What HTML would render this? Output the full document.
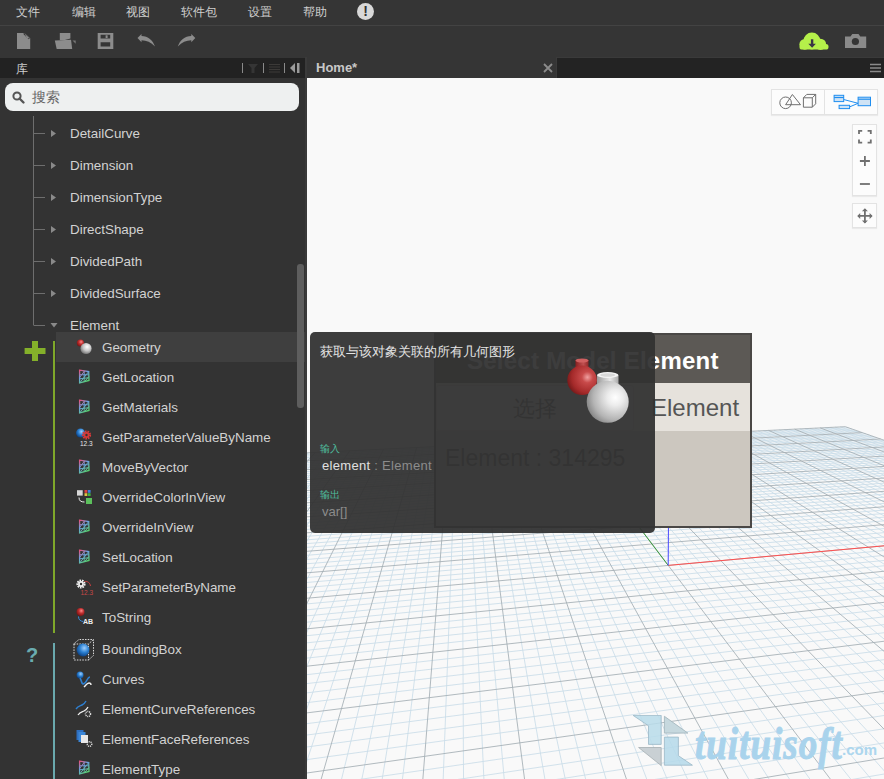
<!DOCTYPE html>
<html><head><meta charset="utf-8">
<style>
*{box-sizing:border-box}
html,body{margin:0;padding:0;width:884px;height:779px;overflow:hidden;background:#353535;font-family:"Liberation Sans",sans-serif}
.a{position:absolute}
#menu{left:0;top:0;width:884px;height:26px;background:#353535;border-bottom:1px solid #434343}
.mi{position:absolute;top:5px;font-size:12px;color:#cfcfcf;line-height:15px;white-space:nowrap}
#tool{left:0;top:25px;width:884px;height:33px;background:transparent}
#libhead{left:0;top:58px;width:305px;height:20px;background:#222}
#libsep{left:305px;top:57px;width:2px;height:722px;background:#3a3a3a}
#lib{left:0;top:78px;width:305px;height:701px;background:#333}
#search{left:5px;top:83px;width:294px;height:28px;border-radius:8px;background:#eef0f0}
.row{position:absolute;font-size:13.4px;color:#d2d2d2;line-height:16px;white-space:nowrap}
#tabbar{left:307px;top:57px;width:577px;height:21px;background:#353535}
#canvas{left:307px;top:78px;width:577px;height:701px;background:#f9f9f9;overflow:hidden}
</style></head><body>
<div id="menu" class="a">
 <div class="mi" style="left:16px">文件</div>
 <div class="mi" style="left:72px">编辑</div>
 <div class="mi" style="left:126px">视图</div>
 <div class="mi" style="left:181px">软件包</div>
 <div class="mi" style="left:248px">设置</div>
 <div class="mi" style="left:303px">帮助</div>
 <div class="a" style="left:357px;top:3px;width:17px;height:17px;border-radius:50%;background:#d8d8d8;color:#313131;font:bold 14px/17px 'Liberation Sans',sans-serif;text-align:center">!</div>
</div>
<div id="tool" class="a">
 <svg class="a" style="left:0;top:0" width="884" height="33">
  <!-- new -->
  <path d="M17 8h7.3l5.9 5v11h-13.2z" fill="#8c8c8c"/><path d="M24.3 8l5.9 5l-1.8 1.2l-5.2-5.4z" fill="#353535"/><path d="M24.6 8.6l4.8 4.4l-2.2 0.8z" fill="#8c8c8c"/>
  <!-- open -->
  <path d="M59.8 8h10.6v5.5l-5.5 1.6h-5.1z" fill="#8c8c8c"/><path d="M54.8 15.4l16.2-0.6l1.2 9.1h-15.5z" fill="#8c8c8c"/><path d="M72.5 15.5h3.2v3.2z" fill="#777"/>
  <!-- save -->
  <path d="M97.7 8h15.6v15.9h-15.6zM100.6 9.8v3.8h9.6v-3.8zM100.6 17.3v4.1h9.6v-4.1z" fill="#8c8c8c" fill-rule="evenodd"/><rect x="105.6" y="10.3" width="2" height="2.8" fill="#8c8c8c"/>
  <!-- undo -->
  <path d="M137.5 12.9L141.5 8.9V11C148 11 153 15.5 155 21.6C151 17.2 146.5 15.2 141.5 15.2V17.3Z" fill="#8c8c8c"/>
  <!-- redo -->
  <path d="M195.3 12.9L191.3 8.9V11C184.8 11 179.8 15.5 177.8 21.6C181.8 17.2 186.3 15.2 191.3 15.2V17.3Z" fill="#8c8c8c"/>
  <!-- cloud -->
  <circle cx="811.9" cy="16" r="8.4" fill="#b5f04a"/><circle cx="820.5" cy="19.3" r="5.6" fill="#b5f04a"/><circle cx="804.8" cy="19.3" r="5.4" fill="#b5f04a"/><rect x="799.5" y="19" width="29" height="5.6" rx="2.6" fill="#b5f04a"/>
  <path d="M810.9 14.2h2.4v4.6h2.6l-3.8 4l-3.8-4h2.6z" fill="#3a3545"/>
  <!-- camera -->
  <path d="M845 11.5h5.5l1.8-2.4h6.2l1.8 2.4h5.9v11.4h-21.2z" fill="#8a8a8a"/><circle cx="855.4" cy="16.5" r="3.6" fill="#353535"/>
 </svg>
</div>
<div id="lib" class="a">
<svg class="a" style="left:0;top:0" width="305" height="701">
 <defs>
  <radialGradient id="gw" cx="0.6" cy="0.35" r="0.7"><stop offset="0" stop-color="#fff"/><stop offset="0.5" stop-color="#c8c8c8"/><stop offset="1" stop-color="#6a6a6a"/></radialGradient>
  <radialGradient id="gr" cx="0.6" cy="0.35" r="0.7"><stop offset="0" stop-color="#ff8a8a"/><stop offset="0.45" stop-color="#c03030"/><stop offset="1" stop-color="#701010"/></radialGradient>
  <radialGradient id="gb" cx="0.6" cy="0.35" r="0.7"><stop offset="0" stop-color="#9fd0ff"/><stop offset="0.5" stop-color="#2a7fd0"/><stop offset="1" stop-color="#0a3a7a"/></radialGradient>
  <linearGradient id="mg" x1="0" y1="0" x2="0.6" y2="1"><stop offset="0" stop-color="#e8507a"/><stop offset="0.45" stop-color="#6aa0e0"/><stop offset="1" stop-color="#58d070"/></linearGradient>
  <g id="mesh" fill="none" stroke="url(#mg)">
   <path d="M1.1 -0.3L10.2 1.1L10.5 9.9L1.1 12.5Z" stroke-width="1.3"/>
   <path d="M1.1 4.2L10.3 4.3M1.1 8.3L10.4 7.2M5.7 0.4V11.3M10.2 1.1L1.1 12.5M6 0.5L1.1 7M10.4 6L5.8 11.5" stroke-width="1"/>
  </g>
 </defs>
 <path d="M33.5 38V247.5" stroke="#6e6e6e" stroke-width="1"/>
 <path d="M34 55.5h11M34 87.5h11M34 119.5h11M34 151.5h11M34 183.5h11M34 215.5h11M34 247.5h11" stroke="#6e6e6e" stroke-width="1"/>
 <path d="M51 52v7l5-3.5zM51 84v7l5-3.5zM51 116v7l5-3.5zM51 148v7l5-3.5zM51 180v7l5-3.5zM51 212v7l5-3.5z" fill="#8a8a8a"/>
 <path d="M50.5 245h7l-3.5 4.5z" fill="#8a8a8a"/>
 <rect x="56" y="254" width="249" height="30" fill="#3f3f3f"/>
 <rect x="53" y="263" width="2" height="292" fill="#7fa82a"/>
 <rect x="53" y="565" width="2" height="136" fill="#6aa9ae"/>
 <path d="M32 263h6v7h7.5v6h-7.5v7h-6v-7h-7.4v-6h7.4z" fill="#84b02a"/>
 <rect x="297" y="186" width="7" height="144" rx="3" fill="#5e5e5e"/>
 <!-- geometry -->
 <circle cx="80.4" cy="265" r="3.6" fill="url(#gr)"/><circle cx="86" cy="270.5" r="5.6" fill="url(#gw)"/>
 <use href="#mesh" x="78.5" y="292.5"/>
 <use href="#mesh" x="78.5" y="322.5"/>
 <!-- getparam -->
 <circle cx="80.5" cy="355" r="4.5" fill="url(#gb)"/>
 <circle cx="86.5" cy="357" r="3.6" fill="none" stroke="#d83a3a" stroke-width="2" stroke-dasharray="1.6 0.9"/><circle cx="86.5" cy="357" r="2.9" fill="#d83a3a"/><circle cx="86.5" cy="357" r="1.2" fill="#333"/>
 <text x="80" y="368" font-family="Liberation Sans" font-size="6.5" fill="#e8e8e8">12.3</text>
 <use href="#mesh" x="78.5" y="382.5"/>
 <!-- override color -->
 <rect x="77" y="412.2" width="5.7" height="5.4" fill="#d8d8d8"/>
 <rect x="84.5" y="412" width="2.8" height="2.8" fill="#e04040"/><rect x="87.8" y="412" width="2.8" height="2.8" fill="#4080e0"/><rect x="84.5" y="415.2" width="2.8" height="2.8" fill="#e0c040"/><rect x="87.8" y="415.2" width="2.8" height="2.8" fill="#40b040"/>
 <rect x="86" y="420" width="6" height="6" fill="#5cc05c"/>
 <path d="M79 419.5C79 423 81 424 84.5 424" fill="none" stroke="#eee" stroke-width="1"/>
 <use href="#mesh" x="78.5" y="442.5"/>
 <use href="#mesh" x="78.5" y="472.5"/>
 <!-- setparam -->
 <circle cx="81" cy="506" r="3.6" fill="none" stroke="#f0f0f0" stroke-width="2" stroke-dasharray="1.6 0.9"/><circle cx="81" cy="506" r="2.9" fill="#f0f0f0"/><circle cx="81" cy="506" r="1.2" fill="#333"/>
 <path d="M84.5 503.5C88 503 90 505 90.5 508" fill="none" stroke="#c84040" stroke-width="1"/>
 <text x="80.5" y="517" font-family="Liberation Sans" font-size="6.5" fill="#c84848">12.3</text>
 <!-- tostring -->
 <circle cx="80.5" cy="534" r="4" fill="url(#gr)"/>
 <path d="M78.5 538.5C78.5 542 80.5 543 83 543.5" fill="none" stroke="#3a8ad8" stroke-width="1"/>
 <text x="83" y="545.5" font-family="Liberation Sans" font-weight="bold" font-size="7" fill="#eee">AB</text>
 <!-- bounding box -->
 <path d="M74 566h14.5l5 -4.5M74 566v16h14.5v-16M88.5 582l5-4.5v-16h-14.5l-5.5 4.5" fill="none" stroke="#ddd" stroke-width="1" stroke-dasharray="1.5 1.2"/>
 <circle cx="83" cy="572" r="6.4" fill="url(#gb)"/>
 <!-- curves -->
 <circle cx="80" cy="597" r="3.5" fill="url(#gb)"/>
 <path d="M80 600c2 3 1 5 3 6c2 0 3-2 4-4c1-2 2-3 3-3" fill="none" stroke="#2e7fd0" stroke-width="1.6"/>
 <path d="M84 609c2-2 3-4 5-4c1 0 2 1 2 2" fill="none" stroke="#f0f0f0" stroke-width="1.4"/>
 <!-- curve refs -->
 <path d="M76 631c2-3 4-3 6-4c2-1 3-2 4-4" fill="none" stroke="#2e7fd0" stroke-width="1.4"/>
 <path d="M78 637c2-3 4-3 6-4c2-1 3-2 4-4" fill="none" stroke="#f0f0f0" stroke-width="1.3"/>
 <circle cx="88" cy="636" r="2.5" fill="none" stroke="#e0e0e0" stroke-width="1.5" stroke-dasharray="1 0.8"/>
 <!-- face refs -->
 <rect x="76.5" y="652" width="7" height="10" fill="#2e6fc0"/><rect x="78.5" y="654" width="7" height="10" fill="#3a86d8"/>
 <rect x="81" y="657" width="7" height="8" fill="#e8e8e8"/>
 <circle cx="89.5" cy="666" r="2.3" fill="none" stroke="#e0e0e0" stroke-width="1.4" stroke-dasharray="1 0.8"/>
 <use href="#mesh" x="78.5" y="683.5"/>
</svg>
<div class="a" style="left:26px;top:567px;font:bold 20px/20px 'Liberation Sans',sans-serif;color:#6aacb0">?</div>
<div class="row" style="left:70px;top:48px">DetailCurve</div>
<div class="row" style="left:70px;top:80px">Dimension</div>
<div class="row" style="left:70px;top:112px">DimensionType</div>
<div class="row" style="left:70px;top:144px">DirectShape</div>
<div class="row" style="left:70px;top:176px">DividedPath</div>
<div class="row" style="left:70px;top:208px">DividedSurface</div>
<div class="row" style="left:70px;top:240px">Element</div>
<div class="row" style="left:102px;top:262px">Geometry</div>
<div class="row" style="left:102px;top:292px">GetLocation</div>
<div class="row" style="left:102px;top:322px">GetMaterials</div>
<div class="row" style="left:102px;top:352px">GetParameterValueByName</div>
<div class="row" style="left:102px;top:382px">MoveByVector</div>
<div class="row" style="left:102px;top:412px">OverrideColorInView</div>
<div class="row" style="left:102px;top:442px">OverrideInView</div>
<div class="row" style="left:102px;top:472px">SetLocation</div>
<div class="row" style="left:102px;top:502px">SetParameterByName</div>
<div class="row" style="left:102px;top:532px">ToString</div>
<div class="row" style="left:102px;top:564px">BoundingBox</div>
<div class="row" style="left:102px;top:594px">Curves</div>
<div class="row" style="left:102px;top:624px">ElementCurveReferences</div>
<div class="row" style="left:102px;top:654px">ElementFaceReferences</div>
<div class="row" style="left:102px;top:684px">ElementType</div>

</div>
<div id="libhead" class="a">
 <div class="a" style="left:16px;top:4px;font-size:12px;color:#cfcfcf;line-height:15px">库</div>
 <svg class="a" style="left:0;top:0" width="305" height="20">
  <rect x="242" y="5" width="1" height="10" fill="#8a8a8a"/>
  <rect x="263" y="5" width="1" height="10" fill="#8a8a8a"/>
  <rect x="284" y="5" width="1" height="10" fill="#8a8a8a"/>
  <path d="M248 6h10l-3.5 4v5h-3v-5z" fill="#353535"/>
  <path d="M269 6h11v1h-11zM269 8.5h11v1h-11zM269 11h11v1h-11zM269 13.5h11v1h-11z" fill="#3c3a38"/>
  <path d="M295 5v10l-5-5z" fill="#9a9a9a"/><rect x="297" y="5" width="2.5" height="10" fill="#9a9a9a"/>
 </svg>
</div>
<div id="libsep" class="a"></div>
<div id="search" class="a">
 <svg class="a" style="left:7px;top:8px" width="14" height="14"><circle cx="5" cy="5" r="3.6" fill="none" stroke="#555" stroke-width="2"/><path d="M7.5 7.5l4 4" stroke="#555" stroke-width="2.4" stroke-linecap="round"/></svg>
 <div class="a" style="left:27px;top:6px;font-size:14px;color:#666;line-height:16px">搜索</div>
</div>
<div id="tabbar" class="a">
 <div class="a" style="left:9px;top:4px;font:bold 13px/14px 'Liberation Sans',sans-serif;color:#c8c8c8">Home*</div>
 <svg class="a" style="left:236px;top:6px" width="10" height="10"><path d="M1 1l8 8M9 1l-8 8" stroke="#8c8c8c" stroke-width="1.8"/></svg>
 <div class="a" style="left:249px;top:0;width:328px;height:21px;background:#232323;border-top:1px solid #3a3a3a;border-left:1px solid #3a3a3a"></div>
 <svg class="a" style="left:563px;top:6px" width="12" height="11"><path d="M0 1.5h11M0 5h11M0 8.5h11" stroke="#8a8a8a" stroke-width="1.6"/></svg>
</div>
<div id="canvas" class="a">
<svg width="577" height="701" style="position:absolute;left:0;top:0">
<path d="M-4257.5 3638.5L-55.5 377.5M-718.4 3630.9L2456.5 1017.8M-4114.7 3638.2L-48.3 377.2M-1419.1 3632.4L2345.9 979.3M-3971.9 3637.9L-41.1 376.8M-2119.9 3633.9L2245.5 944.2M-3829.1 3637.6L-33.9 376.5M-2820.6 3635.4L2153.8 912.2M-3543.4 3637.0L-19.7 375.8M-4222.1 3638.4L1992.7 856.0M-3400.6 3636.6L-12.7 375.5M-3775.6 3169.1L1921.5 831.2M-3257.8 3636.3L-5.6 375.1M-3165.0 2710.1L1855.6 808.2M-3114.9 3636.0L1.4 374.8M-2718.6 2374.5L1794.4 786.9M-2829.3 3635.4L15.3 374.1M-2109.6 1916.7L1684.4 748.5M-2686.5 3635.1L22.2 373.8M-1892.7 1753.6L1634.8 731.2M-2543.6 3634.8L29.1 373.4M-1713.7 1619.0L1588.2 714.9M-2400.8 3634.5L36.0 373.1M-1563.5 1506.1L1544.5 699.7M-2115.2 3633.9L49.6 372.4M-1325.5 1327.2L1464.7 671.8M-1972.4 3633.6L56.4 372.1M-1229.6 1255.1L1428.1 659.1M-1829.5 3633.3L63.2 371.8M-1145.4 1191.8L1393.5 647.0M-1686.7 3633.0L69.9 371.4M-1070.9 1135.8L1360.7 635.6M-1401.1 3632.3L83.3 370.8M-944.8 1041.0L1300.1 614.4M-1258.2 3632.0L89.9 370.5M-891.0 1000.6L1272.1 604.7M-1115.4 3631.7L96.6 370.1M-842.3 963.9L1245.3 595.3M-972.6 3631.4L103.2 369.8M-797.8 930.5L1219.9 586.4M-686.9 3630.8L116.3 369.2M-719.9 871.9L1172.3 569.9M-544.1 3630.5L122.8 368.9M-685.5 846.1L1150.1 562.1M-401.3 3630.2L129.3 368.6M-653.8 822.2L1128.8 554.7M-258.5 3629.9L135.7 368.2M-624.3 800.1L1108.4 547.6M28.9 3583.4L148.6 367.6M-571.4 760.3L1070.1 534.2M169.1 3444.6L155.0 367.3M-547.6 742.4L1052.1 527.9M298.3 3316.8L161.4 367.0M-525.2 725.6L1034.8 521.9M417.7 3198.7L167.7 366.7M-504.3 709.8L1018.1 516.1M631.2 2987.5L180.3 366.1M-466.0 681.1L986.6 505.1M727.0 2892.7L186.6 365.8M-448.5 667.9L971.7 499.9M816.5 2804.2L192.8 365.5M-432.0 655.5L957.3 494.9M900.3 2721.3L199.1 365.2M-416.3 643.7L943.4 490.0M1052.7 2570.4L211.4 364.6M-387.4 622.0L917.0 480.8M1122.3 2501.6L217.6 364.3M-374.0 611.9L904.5 476.4M1187.9 2436.6L223.7 364.0M-361.2 602.3L892.3 472.2M1250.0 2375.3L229.8 363.7M-349.1 593.2L880.6 468.1M1364.3 2262.2L242.0 363.1M-326.4 576.1L858.2 460.3M1417.1 2209.9L248.0 362.8M-315.9 568.2L847.5 456.5M1467.3 2160.3L254.0 362.5M-305.7 560.6L837.1 452.9M1515.1 2113.0L260.0 362.2M-296.0 553.3L827.1 449.4M1604.0 2025.1L271.9 361.6M-277.8 539.6L807.8 442.7M1645.4 1984.1L277.8 361.3M-269.2 533.1L798.6 439.5M1685.0 1944.9L283.7 361.1M-261.0 527.0L789.6 436.3M1722.9 1907.4L289.6 360.8M-253.1 521.0L780.9 433.3M1794.0 1837.0L301.3 360.2M-238.1 509.8L764.1 427.5M1827.4 1804.0L307.1 359.9M-231.0 504.4L756.1 424.7M1859.5 1772.3L312.9 359.6M-224.2 499.3L748.2 421.9M1890.3 1741.8L318.7 359.4M-217.6 494.3L740.6 419.3M1948.4 1684.3L330.2 358.8M-205.1 484.9L725.9 414.1M1975.9 1657.1L335.9 358.5M-199.2 480.5L718.8 411.7M2002.4 1630.9L341.6 358.2M-193.4 476.1L711.9 409.3M2027.9 1605.6L347.2 358.0M-187.8 472.0L705.2 406.9M2076.4 1557.7L358.5 357.4M-177.2 464.0L692.2 402.4M2099.4 1534.9L364.1 357.1M-172.2 460.2L685.9 400.2M2121.6 1512.9L369.7 356.9M-167.2 456.5L679.8 398.1M2143.1 1491.6L375.3 356.6M-162.5 452.9L673.8 396.0M2184.1 1451.1L386.3 356.1M-153.3 446.0L662.3 391.9M2203.7 1431.7L391.8 355.8M-149.0 442.7L656.7 390.0M2222.6 1413.0L397.3 355.5M-144.7 439.5L651.2 388.1M2241.0 1394.8L402.8 355.3M-140.6 436.4L645.8 386.2M2276.1 1360.1L413.7 354.7M-132.7 430.5L635.5 382.6M2292.9 1343.5L419.1 354.5M-128.9 427.6L630.5 380.8M2309.2 1327.3L424.5 354.2M-125.2 424.8L625.5 379.1M2325.1 1311.6L429.8 354.0M-121.6 422.1L620.7 377.4M2355.5 1281.5L440.5 353.4M-114.6 416.9L611.4 374.2M2370.1 1267.1L445.8 353.2M-111.3 414.4L606.8 372.6M2384.3 1253.0L451.1 352.9M-108.0 411.9L602.4 371.1M2398.2 1239.3L456.4 352.7M-104.8 409.5L598.0 369.5M2424.8 1213.0L466.9 352.2M-98.7 404.9L589.6 366.6M2437.6 1200.3L472.1 351.9M-95.7 402.7L585.5 365.1M2450.1 1187.9L477.3 351.7M-92.8 400.5L581.4 363.7M2462.3 1175.9L482.5 351.4M-90.0 398.4L577.5 362.4M2485.8 1152.6L492.8 350.9M-84.6 394.3L569.8 359.7M2497.1 1141.4L497.9 350.6M-81.9 392.3L566.0 358.4M2508.2 1130.5L503.0 350.4M-79.3 390.4L562.3 357.1M2519.0 1119.8L508.1 350.2M-76.8 388.5L558.7 355.8M2539.8 1099.1L518.2 349.7M-71.9 384.8L551.7 353.4M2549.9 1089.2L523.3 349.4M-69.5 383.0L548.2 352.2M2559.8 1079.4L528.3 349.2M-67.2 381.3L544.9 351.0M2569.4 1069.9L533.3 348.9M-64.9 379.6L541.5 349.8" stroke="#cadde8" stroke-width="0.85" fill="none"/>
<path d="M-4400.4 3638.8L-62.7 377.9M-17.6 3629.4L2578.9 1060.5M-3686.2 3637.3L-26.8 376.1M-3521.4 3636.9L2069.9 883.0M-2972.1 3635.7L8.4 374.4M-2378.0 2118.5L1737.5 767.0M-2258.0 3634.2L42.8 372.8M-1435.6 1410.0L1503.4 685.4M-1543.9 3632.7L76.6 371.1M-1004.4 1085.8L1329.7 624.7M-829.8 3631.1L109.7 369.5M-757.2 900.0L1195.5 578.0M-115.7 3629.6L142.2 367.9M-596.9 779.5L1088.9 540.8M528.3 3089.2L174.0 366.4M-484.6 695.0L1002.1 510.5M978.9 2643.5L205.3 364.9M-401.5 632.6L930.0 485.3M1308.7 2317.2L235.9 363.4M-337.5 584.5L869.2 464.1M1560.6 2068.0L266.0 361.9M-286.7 546.3L817.3 446.0M1759.2 1871.5L295.5 360.5M-245.5 515.3L772.4 430.3M1919.9 1712.5L324.5 359.1M-211.3 489.6L733.2 416.7M2052.6 1581.2L352.9 357.7M-182.4 467.9L698.6 404.6M2163.9 1471.0L380.8 356.3M-157.8 449.4L668.0 393.9M2258.8 1377.2L408.2 355.0M-136.6 433.4L640.6 384.4M2340.5 1296.3L435.2 353.7M-118.0 419.5L616.0 375.8M2411.7 1226.0L461.6 352.4M-101.7 407.2L593.8 368.0M2474.2 1164.1L487.6 351.1M-87.3 396.3L573.6 361.0M2529.5 1109.3L513.2 349.9M-74.3 386.6L555.2 354.6M2578.9 1060.5L538.3 348.7M-62.7 377.9L538.3 348.7" stroke="#a3adb4" stroke-width="0.85" fill="none"/>
<path d="M361.2 487.4L817.3 446.0" stroke="#ff5050" stroke-width="1"/>
<path d="M361.2 487.4L326.1 441.1" stroke="#3c9a3c" stroke-width="1"/>
<path d="M361.2 487.4L362.4 300" stroke="#4848ff" stroke-width="1"/>
</svg>
<!-- view toggle -->
<div class="a" style="left:464px;top:11px;width:107px;height:26px;background:#fcfcfc;border:1px solid #e3e3e3;box-shadow:0 1px 1px rgba(0,0,0,.06)"></div>
<div class="a" style="left:517px;top:12px;width:1px;height:24px;background:#e3e3e3"></div>
<div class="a" style="left:545px;top:46px;width:25px;height:72px;background:#fcfcfc;border:1px solid #e3e3e3;box-shadow:0 1px 1px rgba(0,0,0,.06)"></div>
<div class="a" style="left:545px;top:125px;width:25px;height:25px;background:#fcfcfc;border:1px solid #e3e3e3;box-shadow:0 1px 1px rgba(0,0,0,.06)"></div>
<svg class="a" style="left:0;top:0" width="577" height="160">
 <g fill="none" stroke="#6e6e6e" stroke-width="1">
  <circle cx="478.6" cy="24.8" r="5.8"/>
  <path d="M485.4 16.5L478.6 26.7H493.5Z"/>
  <path d="M496.4 19.8h8.9v9.4h-8.9zM496.4 19.8l3.4-3.4h8.9v9.4l-3.4 3.4M505.3 19.8l3.4-3.4"/>
 </g>
 <g stroke="#1f8ef0" stroke-width="1" fill="#cfe3f5">
  <path d="M536.6 21.5L551.1 25.3M542.6 28.9L551.1 25.3" fill="none"/>
  <rect x="527.1" y="17.3" width="9.6" height="6.3"/><path d="M527.1 19.5h9.6" fill="none" stroke-width="1.2"/>
  <rect x="532.1" y="27.3" width="10.5" height="3.3"/>
  <rect x="551.1" y="19.2" width="12.4" height="8.5"/><path d="M551.1 21.2h12.4" fill="none" stroke-width="1.2"/>
 </g>
 <g fill="none" stroke="#707070" stroke-width="1.8">
  <path d="M552 56v-3.1h3.2M560.6 52.9h3.2v3.1M563.8 61.5v3.1h-3.2M555.2 64.6h-3.2v-3.1"/>
  <path d="M552.9 83h10M557.9 78v10"/>
  <path d="M552.9 106h10"/>
  <path d="M557.9 131v13.8M551 137.9h13.8"/>
 </g>
 <path d="M557.9 130.2l-3 3h6zM557.9 145.6l-3-3h6zM550.2 137.9l3-3v6zM565.6 137.9l-3-3v6z" fill="#707070"/>
</svg>
<!-- node -->
<div class="a" style="left:127px;top:255px;width:318px;height:195px;background:#ccc7bf;border:2px solid #4a4846"></div>
<div class="a" style="left:129px;top:257px;width:314px;height:48px;background:#5c5955"></div>
<div class="a" style="left:129px;top:305px;width:314px;height:48px;background:#e6e2dc"></div>
<div class="a" style="left:160px;top:269px;font:bold 24px/28px 'Liberation Sans',sans-serif;color:#fff;white-space:nowrap;letter-spacing:0.25px">Select Model Element</div>
<div class="a" style="left:129px;top:307px;width:198px;height:46px;border:1px solid #cfcac3;border-radius:3px;background:#e9e6e1"></div>
<div class="a" style="left:206px;top:318px;font:22px/26px 'Liberation Sans',sans-serif;color:#555;white-space:nowrap">选择</div>
<div class="a" style="left:344px;top:316px;font:24px/28px 'Liberation Sans',sans-serif;color:#555;white-space:nowrap">Element</div>
<div class="a" style="left:138px;top:366px;font:23px/28px 'Liberation Sans',sans-serif;color:#4a4a4a;white-space:nowrap">Element : 314295</div>
<!-- tooltip -->
<div class="a" style="left:3px;top:254px;width:345px;height:201px;border-radius:5px;background:rgba(50,50,50,.945)"></div>
<div class="a" style="left:13px;top:266px;font-size:13px;line-height:16px;color:#e4e4e4;white-space:nowrap">获取与该对象关联的所有几何图形</div>
<div class="a" style="left:13px;top:365px;font-size:10px;line-height:12px;color:#4fbf9f">输入</div>
<div class="a" style="left:15px;top:380px;font-size:13px;line-height:16px;color:#e0e0e0;white-space:nowrap;letter-spacing:0.3px">element<span style="color:#8c8c8c"> : Element</span></div>
<div class="a" style="left:13px;top:411px;font-size:10px;line-height:12px;color:#4fbf9f">输出</div>
<div class="a" style="left:15px;top:426px;font-size:13px;line-height:16px;color:#8c8c8c">var[]</div>
<svg class="a" style="left:250px;top:275px" width="90" height="80">
 <defs>
  <radialGradient id="bw" cx="0.68" cy="0.4" r="0.75"><stop offset="0" stop-color="#ffffff"/><stop offset="0.25" stop-color="#ececec"/><stop offset="0.7" stop-color="#b4b4b4"/><stop offset="1" stop-color="#7a7a7a"/></radialGradient>
  <radialGradient id="br" cx="0.68" cy="0.4" r="0.75"><stop offset="0" stop-color="#f0a0a0"/><stop offset="0.25" stop-color="#c84a4a"/><stop offset="0.7" stop-color="#a52a2a"/><stop offset="1" stop-color="#6a1616"/></radialGradient>
  <linearGradient id="nr" x1="0" x2="1"><stop offset="0" stop-color="#8a2020"/><stop offset="0.6" stop-color="#c05050"/><stop offset="1" stop-color="#902828"/></linearGradient>
  <linearGradient id="nw" x1="0" x2="1"><stop offset="0" stop-color="#9a9a9a"/><stop offset="0.6" stop-color="#e8e8e8"/><stop offset="1" stop-color="#aaa"/></linearGradient>
 </defs>
 <rect x="18.5" y="7" width="13" height="11" fill="url(#nr)"/>
 <ellipse cx="25" cy="7.5" rx="6.5" ry="2" fill="#d06060"/>
 <circle cx="25.1" cy="27.2" r="14.8" fill="url(#br)"/>
 <rect x="40" y="22" width="21.5" height="11" fill="url(#nw)"/>
 <ellipse cx="50.7" cy="22" rx="10.7" ry="3" fill="#f4f4f4"/>
 <ellipse cx="50.7" cy="22" rx="7.5" ry="1.8" fill="#d8d8d8"/>
 <circle cx="50.7" cy="48.8" r="21" fill="url(#bw)"/>
</svg>
<svg class="a" style="left:326px;top:637px" width="64" height="54">
 <g stroke-width="0.8" stroke-linejoin="round">
 <path d="M0.1 0.4H28.2V29.4H15.5V10.8Z" fill="#b9dcea" fill-opacity="0.85" stroke="#9ab8c6"/>
 <path d="M31.4 1.3L54.9 18.1H31.4Z" fill="#c6d8de" stroke="#9fb2ba"/>
 <path d="M5.6 32.5H28.2V50.6Z" fill="#c9d0d4" stroke="#a6aeb3"/>
 <path d="M31.4 22.1H45.4V40.7L59.4 50.2H31.4Z" fill="#b5d9ea" fill-opacity="0.85" stroke="#9ab8c6"/>
 </g>
</svg>
<div class="a" style="left:388px;top:648px;font:italic bold 37px/40px 'Liberation Serif',serif;color:#a9d3ec;white-space:nowrap;letter-spacing:1px;transform:scaleY(1.28);transform-origin:0 29px;-webkit-text-stroke:0.8px #a9d3ec">tuituisoft</div>
<div class="a" style="left:535px;top:663px;font:bold 15px/18px 'Liberation Sans',sans-serif;color:#acd6ee;white-space:nowrap">.com</div>

</div>
</body></html>
